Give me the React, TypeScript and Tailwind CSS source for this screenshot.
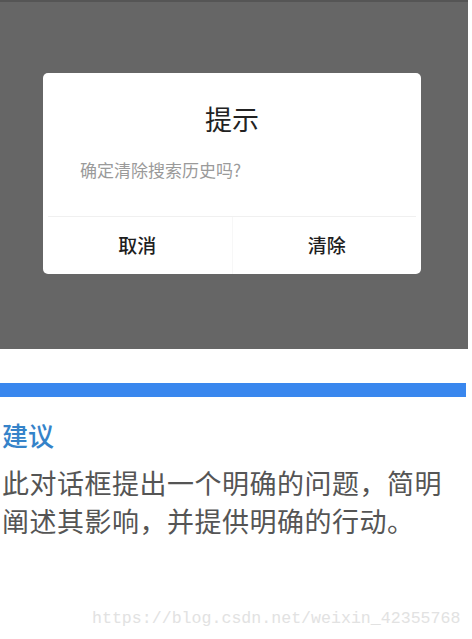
export default function App() {
  return (
    <div className="w-[472px] h-[639px] bg-white overflow-hidden font-['Noto_Sans_CJK_SC',sans-serif]">
      <div className="w-[468px] h-[349px] bg-[#666666] border-t-2 border-[#555555] pt-[71px]">
        <div className="ml-[43px] w-[378px] h-[201px] bg-white rounded-[5px] flex flex-col">
          <div className="pt-[31px] text-center text-[27px] leading-[30px] text-[#222222]">提示</div>
          <div className="mt-[24px] pl-[37px] text-[17px] leading-[24px] text-[#9a9a9a]">确定清除搜索历史吗?</div>
          <div className="mt-[34px] mx-[5px] h-px bg-[#f0f0f0]" />
          <div className="flex flex-1">
            <button className="flex-1 flex items-center justify-center text-[19px] font-medium text-[#1e1e1e] border-r border-[#f7f7f7]">取消</button>
            <button className="flex-1 flex items-center justify-center text-[19px] font-medium text-[#1e1e1e]">清除</button>
          </div>
        </div>
      </div>
      <div className="mt-[34px] w-[466px] h-[14px] bg-[#3987ee]" />
      <div className="mt-[22px] pl-[2px] text-[26px] leading-[32px] font-medium text-[#3583c9]">建议</div>
      <p className="mt-[13px] pl-[2px] text-[27px] leading-[38px] text-[#555555] tracking-[0.5px]">
        此对话框提出一个明确的问题，简明
        <br />
        阐述其影响，并提供明确的行动。
      </p>
      <div className="mt-[69px] ml-[92px] font-['Liberation_Mono',monospace] text-[16.6px] leading-[20px] text-[#e2e2e2]">
        https://blog.csdn.net/weixin_42355768
      </div>
    </div>
  );
}
